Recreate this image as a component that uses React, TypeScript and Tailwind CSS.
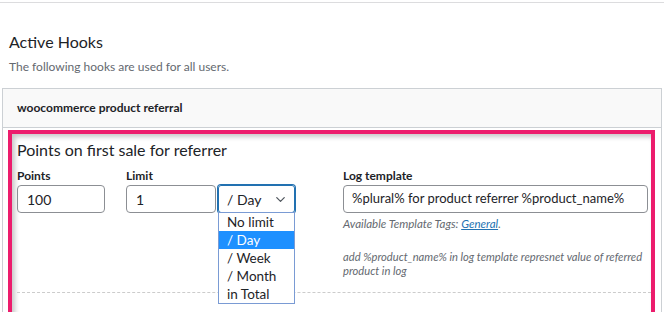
import { ChevronDown } from "lucide-react";

const options = ["No limit", "/ Day", "/ Week", "/ Month", "in Total"];

export default function App() {
  return (
    <div
      className="w-[664px] h-[312px] overflow-hidden bg-white text-[#1d2327]"
      style={{ fontFamily: 'Lato, "Noto Sans", sans-serif' }}
    >
      <div className="mt-[2px] border-t border-[#dcdcde]" />

      <div className="px-[9px] pt-[28px]">
        <h2 className="text-[16px] leading-[22px]">Active Hooks</h2>
        <p className="mt-[6px] text-[12px] leading-[16px] text-[#646970]">
          The following hooks are used for all users.
        </p>
      </div>

      <div className="ml-[2px] mt-[13px] w-[660px] border border-[#ccd0d4]">
        <div className="flex h-[39px] items-center border-b border-[#ccd0d4] bg-[#f9f9f9] px-[14px]">
          <span className="text-[12px] font-bold">woocommerce product referral</span>
        </div>

        <div className="pl-[5px] pt-[2px]">
          <div className="h-[200px] w-[647px] border-4 border-[#ec1c6c] shadow-[inset_3px_3px_5px_rgba(0,0,0,0.22)]">
            <div className="pl-[5px] pt-[6px]">
              <h3 className="text-[16px] leading-[20px]">Points on first sale for referrer</h3>

              <div className="mt-[8px] flex">
                <div className="w-[88px]">
                  <label className="block text-[12px] font-bold leading-[16px]">Points</label>
                  <div className="mt-[1px] flex h-[28px] items-center rounded-[4px] border border-[#8c8f94] px-[9px] text-[14px]">
                    100
                  </div>
                </div>

                <div className="ml-[21px]">
                  <label className="block text-[12px] font-bold leading-[16px]">Limit</label>
                  <div className="mt-[1px] flex gap-[2px]">
                    <div className="flex h-[28px] w-[90px] items-center rounded-[4px] border border-[#8c8f94] px-[9px] text-[14px]">
                      1
                    </div>
                    <div className="relative">
                      <div className="flex h-[28px] w-[77px] items-center justify-between rounded-[3px] border border-[#2271b1] pl-[8px] pr-[6px] text-[14px] shadow-[0_0_0_1px_#2271b1]">
                        <span>/ Day</span>
                        <ChevronDown className="h-[15px] w-[15px] text-[#50575e]" strokeWidth={2} />
                      </div>
                      <ul className="absolute left-0 top-[27px] z-10 w-[77px] border border-[#7a9bd4] bg-white text-[13.5px] leading-[18px]">
                        {options.map((o) => (
                          <li
                            key={o}
                            className={
                              o === "/ Day"
                                ? "h-[18px] bg-[#1e90ff] pl-[8px] text-white"
                                : "h-[18px] pl-[8px]"
                            }
                          >
                            {o}
                          </li>
                        ))}
                      </ul>
                    </div>
                  </div>
                </div>

                <div className="ml-[48px] w-[305px]">
                  <label className="block text-[12px] font-bold leading-[16px]">Log template</label>
                  <div className="mt-[1px] flex h-[28px] items-center whitespace-nowrap rounded-[4px] border border-[#8c8f94] px-[8px] text-[13px]">
                    %plural% for product referrer %product_name%
                  </div>
                  <p className="mt-[3px] text-[11.5px] italic leading-[16px] text-[#646970]">
                    Available Template Tags: <span className="text-[#2271b1] underline">General</span>.
                  </p>
                  <p className="mt-[18px] text-[11.2px] italic leading-[14px] text-[#646970]">
                    add %product_name% in log template represnet value of referred product in log
                  </p>
                </div>
              </div>

              <div className="mt-[14px] border-t border-dashed border-[#cccccc]" />
            </div>
          </div>
        </div>
      </div>
    </div>
  );
}
